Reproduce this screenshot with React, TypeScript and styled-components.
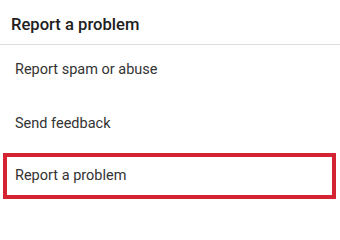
import React from "react";
import styled, { createGlobalStyle } from "styled-components";

const Global = createGlobalStyle`
  html, body { margin: 0; padding: 0; background: #ffffff; }
  body { font-family: Roboto, "Noto Sans", Arial, sans-serif; -webkit-font-smoothing: antialiased; }
`;

const Sheet = styled.div`
  width: 340px;
  height: 201px;
  background: #ffffff;
  display: flex;
  flex-direction: column;
  overflow: hidden;
`;

const Header = styled.div`
  padding: 15px 11px 9px;
  font-size: 16.6px;
  line-height: 20px;
  font-weight: 500;
  color: #202020;
  border-bottom: 1px solid #dedede;
`;

const Menu = styled.div`
  display: flex;
  flex-direction: column;
`;

const Item = styled.div<{ $highlighted?: boolean }>`
  font-size: 14.5px;
  line-height: 20px;
  color: #333333;
  ${(p) =>
    p.$highlighted
      ? `
    margin: 0 4px 0 3px;
    padding: 9px 8px;
    border: 4px solid #d42333;
  `
      : `
    padding: 15px 15px 19px;
  `}
`;

export default function App() {
  return (
    <>
      <Global />
      <Sheet>
        <Header>Report a problem</Header>
        <Menu>
          <Item>Report spam or abuse</Item>
          <Item>Send feedback</Item>
          <Item $highlighted>Report a problem</Item>
        </Menu>
      </Sheet>
    </>
  );
}
